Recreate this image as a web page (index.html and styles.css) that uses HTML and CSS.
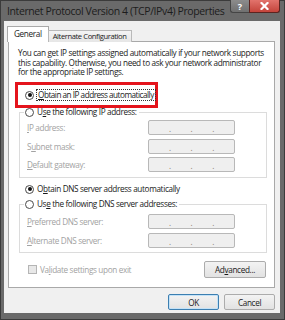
FILE: index.html
```html
<!DOCTYPE html>
<html lang="en">
<head>
    <meta charset="UTF-8">
    <title>Internet Protocol Version 4 (TCP/IPv4) Properties</title>
    <link rel="stylesheet" href="styles.css">
</head>
<body>

    <div class="window">
        <!-- Title bar -->
        <div class="titlebar">
            <span class="title">Internet Protocol Version 4 (TCP/IPv4) Properties</span>
            <div class="caption-btns">
                <span class="cap help">?</span>
                <span class="cap close">
                    <svg width="9" height="8" viewBox="0 0 9 8"><path d="M1.5 1 L7.5 7 M7.5 1 L1.5 7" stroke="#fff" stroke-width="2.2" stroke-linecap="square"/></svg>
                </span>
            </div>
        </div>

        <div class="client">
            <div class="tabs">
                <span class="tab active">General</span>
                <span class="tab">Alternate Configuration</span>
            </div>

            <div class="panel">
                <p class="intro">You can get IP settings assigned automatically if your network supports<br>this capability. Otherwise, you need to ask your network administrator<br>for the appropriate IP settings.</p>

                <div class="highlight">
                    <div class="option"><span class="radio checked"></span><span class="focus"><u>O</u>btain an IP address automatically</span></div>
                </div>

                <fieldset class="group first">
                    <legend class="option"><span class="radio"></span><span>U<u>s</u>e the following IP address:</span></legend>
                    <div class="row"><span class="label"><u>I</u>P address:</span><span class="ip"><i>.</i><i>.</i><i>.</i></span></div>
                    <div class="row"><span class="label">S<u>u</u>bnet mask:</span><span class="ip"><i>.</i><i>.</i><i>.</i></span></div>
                    <div class="row"><span class="label"><u>D</u>efault gateway:</span><span class="ip"><i>.</i><i>.</i><i>.</i></span></div>
                </fieldset>

                <div class="option dns-auto"><span class="radio checked"></span><span>O<u>b</u>tain DNS server address automatically</span></div>

                <fieldset class="group second">
                    <legend class="option"><span class="radio"></span><span>Us<u>e</u> the following DNS server addresses:</span></legend>
                    <div class="row"><span class="label"><u>P</u>referred DNS server:</span><span class="ip"><i>.</i><i>.</i><i>.</i></span></div>
                    <div class="row"><span class="label"><u>A</u>lternate DNS server:</span><span class="ip"><i>.</i><i>.</i><i>.</i></span></div>
                </fieldset>

                <div class="bottom-row">
                    <div class="check-line"><span class="checkbox"></span><span>Va<u>l</u>idate settings upon exit</span></div>
                    <button type="button" class="btn advanced">Ad<u>v</u>anced...</button>
                </div>
            </div>

            <div class="actions">
                <button type="button" class="btn default">OK</button>
                <button type="button" class="btn">Cancel</button>
            </div>
        </div>
    </div>

</body>
</html>
```

FILE: styles.css
```css
body {
    margin: 0;
    font-family: "Open Sans", "Liberation Sans", sans-serif;
    font-size: 8.2px;
    letter-spacing: -0.35px;
    color: #1a1a1a;
}

.window {
    width: 285px;
    height: 320px;
    box-sizing: border-box;
    background: #6a6a6a;
    border: 1px solid #3b3b3b;
    padding: 0 4px 6px 3px;
    display: flex;
    flex-direction: column;
}

/* Title bar */
.titlebar {
    height: 20px;
    flex: none;
    display: flex;
    justify-content: space-between;
    align-items: flex-start;
}

.title {
    font-size: 10.5px;
    letter-spacing: -0.4px;
    line-height: 12px;
    color: #1c1c1c;
    padding: 4px 0 0 3px;
    white-space: nowrap;
}

.caption-btns {
    display: flex;
    margin-top: -1px;
}

.cap {
    height: 13px;
    box-sizing: border-box;
    display: flex;
    align-items: center;
    justify-content: center;
}

.help {
    width: 19px;
    background: linear-gradient(#8c8c8c, #707070);
    border: 1px solid #454545;
    border-top: none;
    border-right: none;
    border-radius: 0 0 0 3px;
    color: #fff;
    font-weight: bold;
    font-size: 9px;
    letter-spacing: 0;
}

.close {
    width: 31px;
    background: linear-gradient(#e2736c, #c4443b);
    border: 1px solid #5c2420;
    border-top: none;
    border-radius: 0 0 3px 0;
}

/* Client area */
.client {
    flex: 1;
    background: #f0f0f0;
    padding: 5px 5px 0 4px;
    display: flex;
    flex-direction: column;
}

.tabs {
    display: flex;
    align-items: flex-end;
    height: 16px;
    margin: 0 0 -1px -1px;
    position: relative;
    z-index: 1;
}

.tab {
    height: 12px;
    line-height: 11px;
    box-sizing: border-box;
    padding: 0 4px;
    border: 1px solid #b9b9b9;
    border-bottom: none;
    background: linear-gradient(#f4f4f4, #e6e6e6);
    font-size: 7.6px;
    letter-spacing: -0.4px;
    white-space: nowrap;
}

.tab.active {
    height: 16px;
    line-height: 14px;
    background: #fff;
    border-color: #a9a9a9;
    padding: 0 6px;
    font-size: 8.2px;
    letter-spacing: -0.35px;
}

.tab + .tab {
    margin-left: -1px;
}

.panel {
    background: #fff;
    border: 1px solid #a9a9a9;
    padding: 6px 7px 9px 6px;
}

.intro {
    margin: 0;
    padding-left: 3px;
    line-height: 9.5px;
    white-space: nowrap;
}

.highlight {
    width: 143px;
    box-sizing: border-box;
    margin-top: 5.5px;
    border: 3px solid #e4141c;
    padding: 5px 0 5px 7px;
}

.option {
    display: flex;
    align-items: center;
    gap: 2px;
    line-height: 10px;
    white-space: nowrap;
}

.radio {
    width: 9px;
    height: 9px;
    box-sizing: border-box;
    border: 1px solid #4a4a4a;
    border-radius: 50%;
    background: #fff;
    display: flex;
    align-items: center;
    justify-content: center;
    margin-right: 1px;
}

.radio.checked::after {
    content: "";
    width: 4px;
    height: 4px;
    border-radius: 50%;
    background: #111;
}

.focus {
    outline: 1px dotted #333;
    padding: 0 1px;
    letter-spacing: -0.5px;
}

/* Group boxes */
.group {
    margin: -1px 0 0 4px;
    border: 1px solid #dcdcdc;
    padding: 3px 0 5px 7px;
    min-width: 0;
}

.group legend {
    margin-left: -3px;
    padding: 0 2px 0 1px;
}

.group.second {
    margin-top: 5px;
    padding-top: 5px;
    padding-bottom: 4.5px;
}

.row {
    display: flex;
    align-items: center;
    height: 15px;
}

.row + .row {
    margin-top: 3.5px;
}

.label {
    width: 121px;
    color: #a2a2a2;
    white-space: nowrap;
}

.ip {
    width: 87px;
    height: 15px;
    box-sizing: border-box;
    border: 1px solid #b8b8b8;
    border-radius: 2px;
    background: #efefef;
    display: flex;
    justify-content: space-evenly;
    align-items: flex-end;
}

.ip i {
    font-style: normal;
    color: #8c7f70;
    line-height: 11px;
}

.dns-auto {
    margin: 6px 0 0 10px;
}

.bottom-row {
    margin-top: 8px;
    display: flex;
    justify-content: space-between;
    align-items: center;
    padding-left: 13px;
}

.check-line {
    display: flex;
    align-items: center;
    gap: 3px;
    color: #a2a2a2;
}

.checkbox {
    width: 9px;
    height: 9px;
    box-sizing: border-box;
    border: 1px solid #b5b5b5;
    background: #e8e8e8;
}

.btn {
    font-family: inherit;
    font-size: 8.2px;
    letter-spacing: -0.35px;
    color: #1a1a1a;
    height: 16px;
    width: 51px;
    padding: 0;
    border: 1px solid #acacac;
    border-radius: 2px;
    background: linear-gradient(#f3f3f3, #e2e2e2);
}

.btn.advanced {
    width: 62px;
    height: 17px;
    margin-right: 1px;
}

.btn.default {
    border-color: #3c7fb1;
    box-shadow: inset 0 0 0 1px #c4e2f7;
}

.actions {
    display: flex;
    justify-content: flex-end;
    gap: 5px;
    margin-top: 6px;
}
```
